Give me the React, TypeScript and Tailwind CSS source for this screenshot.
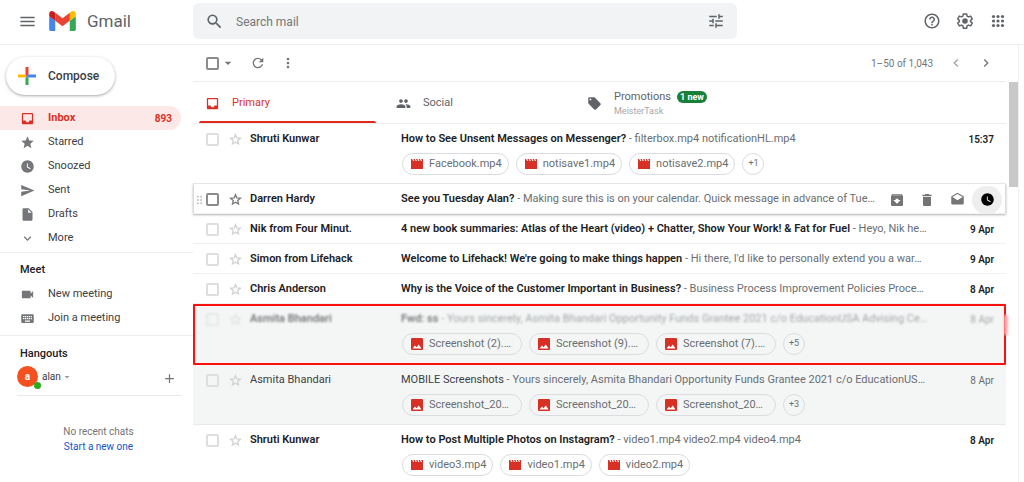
import { useState } from 'react';
import type { ReactNode } from 'react';
import clsx from 'clsx';
import {
  MdAdd,
  MdArrowDropDown,
  MdChevronLeft,
  MdChevronRight,
  MdDragIndicator,
  MdHelpOutline,
  MdMenu,
  MdMoreVert,
  MdRefresh,
  MdSearch,
  MdTune,
} from 'react-icons/md';

type Mail = {
  id: number;
  from: string;
  subject: string;
  snippet: string;
  date: string;
  read?: boolean;
  hovered?: boolean;
  concealed?: boolean;
  fileType?: 'video' | 'image';
  files?: string[];
  more?: string;
};

const MAILS: Mail[] = [
  {
    id: 1,
    from: 'Shruti Kunwar',
    subject: 'How to See Unsent Messages on Messenger?',
    snippet: 'filterbox.mp4 notificationHL.mp4',
    date: '15:37',
    fileType: 'video',
    files: ['Facebook.mp4', 'notisave1.mp4', 'notisave2.mp4'],
    more: '+1',
  },
  {
    id: 2,
    from: 'Darren Hardy',
    subject: 'See you Tuesday Alan?',
    snippet: 'Making sure this is on your calendar. Quick message in advance of Tue…',
    date: '',
    hovered: true,
  },
  {
    id: 3,
    from: 'Nik from Four Minut.',
    subject: '4 new book summaries: Atlas of the Heart (video) + Chatter, Show Your Work! & Fat for Fuel',
    snippet: 'Heyo, Nik he…',
    date: '9 Apr',
  },
  {
    id: 4,
    from: 'Simon from Lifehack',
    subject: "Welcome to Lifehack! We're going to make things happen",
    snippet: "Hi there, I'd like to personally extend you a war…",
    date: '9 Apr',
  },
  {
    id: 5,
    from: 'Chris Anderson',
    subject: 'Why is the Voice of the Customer Important in Business?',
    snippet: 'Business Process Improvement Policies Proce…',
    date: '8 Apr',
  },
  {
    id: 6,
    from: 'Asmita Bhandari',
    subject: 'Fwd: ss',
    snippet: 'Yours sincerely, Asmita Bhandari Opportunity Funds Grantee 2021 c/o EducationUSA Advising Ce…',
    date: '8 Apr',
    read: true,
    concealed: true,
    fileType: 'image',
    files: ['Screenshot (2).…', 'Screenshot (9).…', 'Screenshot (7).…'],
    more: '+5',
  },
  {
    id: 7,
    from: 'Asmita Bhandari',
    subject: 'MOBILE Screenshots',
    snippet: 'Yours sincerely, Asmita Bhandari Opportunity Funds Grantee 2021 c/o EducationUS…',
    date: '8 Apr',
    read: true,
    fileType: 'image',
    files: ['Screenshot_20…', 'Screenshot_20…', 'Screenshot_20…'],
    more: '+3',
  },
  {
    id: 8,
    from: 'Shruti Kunwar',
    subject: 'How to Post Multiple Photos on Instagram?',
    snippet: 'video1.mp4 video2.mp4 video4.mp4',
    date: '8 Apr',
    fileType: 'video',
    files: ['video3.mp4', 'video1.mp4', 'video2.mp4'],
  },
];

// Solid 24px glyphs
const GLYPHS = {
  inbox:
    'M19 3H5c-1.100 0-2 .900-2 2v14c0 1.100.900 2 2 2h14c1.100 0 2-.900 2-2V5c0-1.100-.900-2-2-2zm0 12h-4c0 1.660-1.350 3-3 3s-3-1.340-3-3H5V5h14v10z',
  star: 'M12 17.270 18.180 21l-1.640-7.030L22 9.240l-7.190-.610L12 2 9.190 8.630 2 9.240l5.460 4.730L5.820 21z',
  clock:
    'M12 2C6.500 2 2 6.500 2 12s4.500 10 10 10 10-4.500 10-10S17.500 2 12 2zm4.200 14.200L11 13V7h1.500v5.200l4.500 2.700-.8 1.300z',
  send: 'M2.010 21 23 12 2.010 3 2 10l15 2-15 2z',
  file: 'M6 2c-1.100 0-2 .900-2 2v16c0 1.100.900 2 2 2h12c1.100 0 2-.900 2-2V8l-6-6H6zm7 7V3.500L18.500 9H13z',
  more: 'M16.590 8.590 12 13.170 7.410 8.590 6 10l6 6 6-6z',
  camera:
    'M17 10.500V7c0-.550-.450-1-1-1H4c-.550 0-1 .450-1 1v10c0 .550.450 1 1 1h12c.550 0 1-.450 1-1v-3.500l4 4v-11l-4 4z',
  keyboard:
    'M20 5H4c-1.100 0-2 .900-2 2v10c0 1.100.900 2 2 2h16c1.100 0 2-.900 2-2V7c0-1.100-.900-2-2-2zm-9 3h2v2h-2V8zm0 3h2v2h-2v-2zM8 8h2v2H8V8zm0 3h2v2H8v-2zm-1 2H5v-2h2v2zm0-3H5V8h2v2zm9 7H8v-2h8v2zm0-4h-2v-2h2v2zm0-3h-2V8h2v2zm3 3h-2v-2h2v2zm0-3h-2V8h2v2z',
  people:
    'M16 11c1.660 0 3-1.340 3-3s-1.340-3-3-3-3 1.340-3 3 1.340 3 3 3zm-8 0c1.660 0 3-1.340 3-3S9.660 5 8 5 5 6.340 5 8s1.340 3 3 3zm0 2c-2.330 0-7 1.170-7 3.500V19h14v-2.500c0-2.330-4.670-3.500-7-3.500zm8 0c-.290 0-.620.020-.970.050 1.160.840 1.970 1.970 1.970 3.450V19h6v-2.500c0-2.330-4.670-3.500-7-3.500z',
  tag: 'M21.410 11.580l-9-9C12.050 2.220 11.550 2 11 2H4c-1.100 0-2 .900-2 2v7c0 .550.220 1.050.590 1.420l9 9c.360.360.860.580 1.410.580s1.050-.220 1.410-.590l7-7c.370-.360.590-.860.590-1.410s-.230-1.060-.590-1.420zM5.500 7C4.670 7 4 6.330 4 5.500S4.670 4 5.500 4 7 4.670 7 5.500 6.330 7 5.500 7z',
  archive:
    'M20.540 5.230l-1.390-1.680C18.880 3.210 18.470 3 18 3H6c-.470 0-.880.210-1.160.550L3.460 5.230C3.170 5.570 3 6.020 3 6.500V19c0 1.100.900 2 2 2h14c1.100 0 2-.900 2-2V6.500c0-.480-.170-.930-.460-1.270zM12 17.500L6.500 12H10v-2h4v2h3.500L12 17.500zM5.120 5l.810-1h12l.940 1H5.120z',
  trash: 'M6 19c0 1.100.900 2 2 2h8c1.100 0 2-.900 2-2V7H6v12zM19 4h-3.500l-1-1h-5l-1 1H5v2h14V4z',
  openMail:
    'M22 8c0-.720-.370-1.350-.940-1.700L12 1 2.950 6.300C2.380 6.650 2 7.280 2 8v10c0 1.100.900 2 2 2h16c1.100 0 2-.900 2-2V8zM12 13L3.740 7.840 12 3l8.260 4.840L12 13z',
};

type GlyphName = keyof typeof GLYPHS;

function Glyph({ name, className = 'size-[15px]' }: { name: GlyphName; className?: string }) {
  return (
    <svg viewBox="0 0 24 24" fill="currentColor" className={clsx('shrink-0', className)} aria-hidden="true">
      <path d={GLYPHS[name]} />
    </svg>
  );
}

const FOLDERS: { label: string; icon: GlyphName; count?: number }[] = [
  { label: 'Inbox', icon: 'inbox', count: 893 },
  { label: 'Starred', icon: 'star' },
  { label: 'Snoozed', icon: 'clock' },
  { label: 'Sent', icon: 'send' },
  { label: 'Drafts', icon: 'file' },
  { label: 'More', icon: 'more' },
];

const MEET: { label: string; icon: GlyphName }[] = [
  { label: 'New meeting', icon: 'camera' },
  { label: 'Join a meeting', icon: 'keyboard' },
];

function GmailLogo() {
  return (
    <svg viewBox="52 42 88 66" className="h-5 w-[27px]" aria-hidden="true">
      <path fill="#4285f4" d="M58 108h14V74L52 59v43c0 3.32 2.69 6 6 6" />
      <path fill="#34a853" d="M120 108h14c3.32 0 6-2.69 6-6V59l-20 15" />
      <path fill="#fbbc04" d="M120 48v26l20-15v-8c0-7.42-8.47-11.65-14.4-7.2" />
      <path fill="#ea4335" d="M72 74V48l24 18 24-18v26L96 92" />
      <path fill="#c5221f" d="M52 51v8l20 15V48l-5.6-4.2c-5.94-4.45-14.4-.22-14.4 7.2" />
    </svg>
  );
}

function ComposePlus() {
  return (
    <svg viewBox="0 0 18 18" className="size-[18px]" aria-hidden="true">
      <path fill="#ea4335" d="M7.5 0h3v7.5l-3 3z" />
      <path fill="#4285f4" d="M10.5 7.5H18v3H7.5z" />
      <path fill="#34a853" d="M7.5 10.5h3V18h-3z" />
      <path fill="#fbbc04" d="M0 7.5h7.5v3H0z" />
    </svg>
  );
}

function GearIcon() {
  return (
    <svg viewBox="0 0 24 24" className="size-[18px]" fill="none" aria-hidden="true">
      <path
        stroke="currentColor"
        strokeWidth="2"
        strokeLinejoin="round"
        d="M9.800 2.500h4.400l.6 2.900 1.900 1.100 2.800-1 2.200 3.800-2.200 1.900v1.600l2.200 1.900-2.200 3.800-2.800-1-1.900 1.100-.6 2.900H9.800l-.6-2.900-1.900-1.100-2.800 1-2.200-3.800 2.200-1.900v-1.600L2.300 9.300l2.200-3.800 2.800 1 1.900-1.100z"
      />
      <circle cx="12" cy="12" r="3.700" fill="currentColor" />
    </svg>
  );
}

function AppsIcon() {
  return (
    <svg viewBox="0 0 24 24" className="size-[18px]" fill="currentColor" aria-hidden="true">
      {[6, 12, 18].map((cy) =>
        [6, 12, 18].map((cx) => <circle key={`${cx}-${cy}`} cx={cx} cy={cy} r="2.100" />),
      )}
    </svg>
  );
}

function StarIcon({ filled }: { filled: boolean }) {
  return (
    <svg
      viewBox="0 0 24 24"
      className="size-[15px]"
      fill={filled ? 'currentColor' : 'none'}
      stroke="currentColor"
      strokeWidth="2"
      aria-hidden="true"
    >
      <path d="m12 4.200 2.200 5.300 5.700.5-4.300 3.700 1.300 5.600-4.900-3-4.900 3 1.300-5.600L4.100 10l5.700-.5z" />
    </svg>
  );
}

function VideoIcon() {
  return (
    <svg viewBox="0 0 12 12" className="h-3 w-3 shrink-0" aria-hidden="true">
      <path fill="#d93025" d="M0 1h1.200l.900 2h1.200l-.900-2h1.400l.900 2h1.200L5 1h1.400l.900 2h1.200l-.900-2H9l.900 2h1.200L10.200 1H12v10H0z" />
    </svg>
  );
}

function ImageIcon() {
  return (
    <svg viewBox="0 0 12 12" className="h-3 w-3 shrink-0" aria-hidden="true">
      <rect width="12" height="12" rx="1" fill="#d93025" />
      <path fill="#fff" d="M1.500 10.500 4 7.500l1.500 1.700L7.800 6.500l2.700 4z" />
    </svg>
  );
}

function IconButton({ label, className, children }: { label: string; className?: string; children: ReactNode }) {
  return (
    <button aria-label={label} className={clsx('flex shrink-0 items-center justify-center', className)}>
      {children}
    </button>
  );
}

function Header() {
  return (
    <header className="flex h-[45px] shrink-0 items-center border-b border-[#eeeeee] pb-[2px] text-[#5f6368]">
      <div className="flex w-[193px] shrink-0 items-center pl-[18px]">
        <IconButton label="Main menu">
          <MdMenu size={19} />
        </IconButton>
        <a href="#inbox" className="ml-3 flex items-center gap-[11px]">
          <GmailLogo />
          <span className="text-[17px] leading-5">Gmail</span>
        </a>
      </div>
      <div className="flex h-9 w-[544px] items-center rounded-md bg-[#f1f3f4] px-3">
        <IconButton label="Search">
          <MdSearch size={19} />
        </IconButton>
        <input
          type="text"
          aria-label="Search mail"
          placeholder="Search mail"
          className="ml-3 min-w-0 flex-1 bg-transparent pt-px text-[12px] outline-none placeholder:text-[#757779]"
        />
        <IconButton label="Search options">
          <MdTune size={18} />
        </IconButton>
      </div>
      <div className="ml-auto flex items-center gap-[15px] pr-[17px]">
        <IconButton label="Support">
          <MdHelpOutline size={18} />
        </IconButton>
        <IconButton label="Settings">
          <GearIcon />
        </IconButton>
        <IconButton label="Google apps">
          <AppsIcon />
        </IconButton>
      </div>
    </header>
  );
}

function Sidebar() {
  return (
    <aside className="w-[193px] shrink-0 text-[11px] text-[#3c4043]">
      <div className="pt-3 pb-[11px] pl-[6px]">
        <button className="flex h-[38px] w-[109px] items-center rounded-full pl-3 text-[12px] font-medium shadow-[0_1px_2px_rgba(60,64,67,0.3),0_1px_3px_1px_rgba(60,64,67,0.12)]">
          <ComposePlus />
          <span className="ml-3">Compose</span>
        </button>
      </div>

      <nav>
        {FOLDERS.map(({ label, icon, count }) => (
          <a
            key={label}
            href={`#${label.toLowerCase()}`}
            className={clsx(
              'mr-3 flex h-6 items-center rounded-r-full pr-[9px] pl-5',
              count ? 'bg-[#fce8e6] font-bold text-[#d93025]' : 'text-[#3c4043]',
            )}
          >
            <span className={count ? 'text-[#d93025]' : 'text-[#747679]'}>
              <Glyph name={icon} />
            </span>
            <span className="ml-[13px] flex-1">{label}</span>
            {count && <span className="text-[10px]">{count}</span>}
          </a>
        ))}
      </nav>

      <section className="mt-[2px] border-t border-[#eeeeee] py-[5px]">
        <h2 className="flex h-6 items-center pl-5 font-medium text-[#202124]">Meet</h2>
        {MEET.map(({ label, icon }) => (
          <a key={label} href="#meet" className="flex h-6 items-center pl-5">
            <span className="text-[#747679]">
              <Glyph name={icon} />
            </span>
            <span className="ml-[13px]">{label}</span>
          </a>
        ))}
      </section>

      <section className="border-t border-[#eeeeee] pt-[6px]">
        <h2 className="flex h-6 items-center pl-5 font-medium text-[#202124]">Hangouts</h2>
        <div className="mr-3 ml-[17px] flex h-[30px] items-start border-b border-[#e8e8e8]">
          <button className="flex items-center text-[10px]">
            <span className="relative flex size-[21px] items-center justify-center rounded-full bg-[#f4511e] text-[10px] font-bold text-white">
              a
              <span className="absolute -right-[3px] -bottom-[2px] size-[7px] rounded-full bg-[#2bab1e]" />
            </span>
            <span className="ml-1">alan</span>
            <MdArrowDropDown size={12} className="text-[#9a9a9a]" />
          </button>
          <IconButton label="Start a conversation" className="ml-auto h-6 pr-1 text-[#747679]">
            <MdAdd size={15} />
          </IconButton>
        </div>
        <div className="mt-7 flex flex-col items-center pl-1 text-[10px] leading-[15px]">
          <p className="text-[#757575]">No recent chats</p>
          <a href="#chat" className="text-[#1155cc]">
            Start a new one
          </a>
        </div>
      </section>
    </aside>
  );
}

function Toolbar() {
  return (
    <div className="mr-3 flex h-[37px] items-center border-b border-[#eeeeee] pr-3 pl-[13px] text-[#747679]">
      <input
        type="checkbox"
        aria-label="Select all"
        className="size-[13px] appearance-none rounded-[2px] border-2 border-[#8a8c8e] checked:bg-[#747679]"
      />
      <IconButton label="Select options">
        <MdArrowDropDown size={16} className="ml-px" />
      </IconButton>
      <IconButton label="Refresh" className="ml-[14px]">
        <MdRefresh size={16} />
      </IconButton>
      <IconButton label="More options" className="ml-[14px]">
        <MdMoreVert size={16} />
      </IconButton>
      <span className="ml-auto text-[10px]">1–50 of 1,043</span>
      <IconButton label="Newer" className="ml-[15px] text-[#a0a2a4]">
        <MdChevronLeft size={16} />
      </IconButton>
      <IconButton label="Older" className="ml-[14px]">
        <MdChevronRight size={16} />
      </IconButton>
    </div>
  );
}

function Tabs() {
  return (
    <div role="tablist" className="flex h-[42px] border-b border-[#eeeeee] text-[11px] text-[#5f6368]">
      <button role="tab" aria-selected="true" className="flex w-[191px] flex-col px-[6px] text-[#d93025]">
        <span className="flex w-full flex-1 items-center pt-[3px] pl-[6px]">
          <Glyph name="inbox" />
          <span className="ml-3">Primary</span>
        </span>
        <span className="h-[2px] w-[177px] rounded-t-sm bg-[#e0291d]" />
      </button>
      <button role="tab" aria-selected="false" className="flex w-[191px] items-center pt-px pl-3">
        <Glyph name="people" />
        <span className="ml-3">Social</span>
      </button>
      <button role="tab" aria-selected="false" className="flex w-[191px] items-center pt-px pl-3">
        <Glyph name="tag" />
        <span className="ml-3 text-left">
          <span className="flex items-center gap-[6px] leading-4">
            Promotions
            <span className="rounded-full bg-[#188038] px-[3px] text-[9px] leading-3 font-bold text-white">1 new</span>
          </span>
          <span className="block text-[9px] leading-3 text-[#a5a7a9]">MeisterTask</span>
        </span>
      </button>
    </div>
  );
}

function Attachments({ mail }: { mail: Mail }) {
  return (
    <div className="-mt-px flex h-[22px] gap-[7px] pl-[209px] text-[11px] text-[#6a6e72]">
      {mail.files?.map((file, i) => (
        <button
          key={i}
          className={clsx(
            'flex items-center rounded-full border border-[#dadce0] pr-[6px] pl-2',
            mail.fileType === 'image' && 'w-[120px]',
          )}
        >
          {mail.fileType === 'image' ? <ImageIcon /> : <VideoIcon />}
          <span className="ml-[6px] whitespace-nowrap">{file}</span>
        </button>
      ))}
      {mail.more && (
        <button className="size-[22px] rounded-full border border-[#dadce0] text-[9px]">{mail.more}</button>
      )}
    </div>
  );
}

function MailRow({ mail }: { mail: Mail }) {
  const [starred, setStarred] = useState(false);
  const strong = mail.read && !mail.concealed ? 'text-[#3c4043]' : 'font-semibold text-[#202124]';

  return (
    <li
      className={clsx(
        'relative border-b text-[11px]',
        !mail.files && 'h-[30px]',
        mail.files && (mail.concealed ? 'h-[61px]' : 'h-[60px]'),
        mail.read ? 'border-[#e6eaea] bg-[#f4f6f6]' : 'border-[#f0f1f1] bg-white',
        mail.hovered && 'z-10 shadow-[inset_1px_0_0_#dadce0,inset_-1px_0_0_#dadce0,0_-1px_0_#e4e5e7,0_1px_2px_rgba(60,64,67,0.4)]',
        mail.concealed && 'z-10 rounded-[1px] outline-2 -outline-offset-2 outline-[#fb1010]',
      )}
    >
      <div className={clsx('flex h-[30px] items-center pt-px pr-3', mail.concealed && 'opacity-60 blur-[1px]')}>
        <span className="flex w-[13px] shrink-0 justify-end text-[#c8c8c8]">
          {mail.hovered && <MdDragIndicator size={14} />}
        </span>
        <input
          type="checkbox"
          aria-label={`Select mail from ${mail.from}`}
          className={clsx(
            'size-[13px] shrink-0 appearance-none rounded-[2px] border-2 checked:bg-[#747679]',
            mail.hovered ? 'border-[#8a8c8e]' : 'border-[#dddede]',
          )}
        />
        <button
          aria-label={`Star mail from ${mail.from}`}
          onClick={() => setStarred(!starred)}
          className={clsx('ml-[9px] shrink-0', mail.hovered ? 'text-[#747679]' : 'text-[#d0d1d2]')}
        >
          <StarIcon filled={starred} />
        </button>
        <span className={clsx('ml-[7px] w-[151px] shrink-0 truncate', strong)}>{mail.from}</span>
        <a href={`#mail-${mail.id}`} className="min-w-0 flex-1 truncate text-[#6a6e72]">
          <span className={strong}>{mail.subject}</span> - {mail.snippet}
        </a>
        {mail.hovered ? (
          <div className="-mr-2 flex shrink-0 items-center text-[#747476]">
            <IconButton label="Archive" className="w-[30px]">
              <Glyph name="archive" className="size-4" />
            </IconButton>
            <IconButton label="Delete" className="w-[30px]">
              <Glyph name="trash" className="size-4" />
            </IconButton>
            <IconButton label="Mark as read" className="w-[30px]">
              <Glyph name="openMail" />
            </IconButton>
            <IconButton label="Snooze" className="h-7 w-[30px] rounded-full bg-[#eeeeee] text-black">
              <Glyph name="clock" />
            </IconButton>
          </div>
        ) : (
          <span
            className={clsx(
              'w-[60px] shrink-0 text-right text-[10px]',
              mail.read ? 'text-[#6a6e72]' : 'font-semibold text-[#202124]',
            )}
          >
            {mail.date}
          </span>
        )}
      </div>
      {mail.files && <Attachments mail={mail} />}
      {mail.concealed && (
        <span className="absolute top-[11px] -right-[2px] h-5 w-1 bg-[#ffb0b0] blur-[1px]" />
      )}
    </li>
  );
}

export default function App() {
  return (
    <div className="flex h-screen flex-col overflow-hidden bg-white font-[Roboto,sans-serif]">
      <Header />
      <div className="flex min-h-0 flex-1">
        <Sidebar />
        <main className="mr-[5px] flex min-w-0 flex-1 flex-col border-r border-[#f0f0f0]">
          <Toolbar />
          <div className="flex min-h-0 flex-1">
            <div className="min-w-0 flex-1">
              <Tabs />
              <ul>
                {MAILS.map((mail) => (
                  <MailRow key={mail.id} mail={mail} />
                ))}
              </ul>
            </div>
            <div className="ml-[3px] w-[9px]">
              <div className="h-[105px] bg-[#c8c8c8]" />
            </div>
          </div>
        </main>
      </div>
    </div>
  );
}
